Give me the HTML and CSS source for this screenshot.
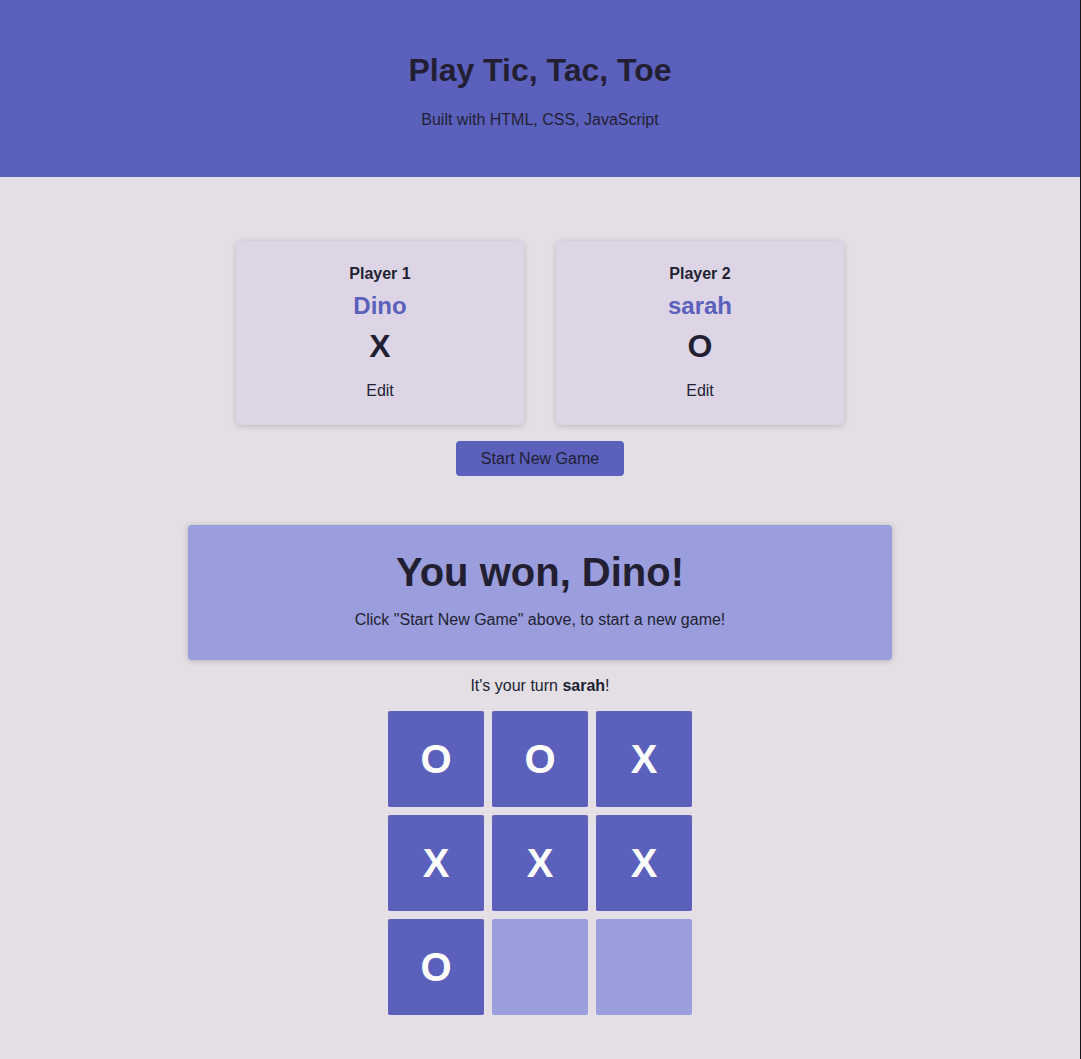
FILE: index.html
```html
<!DOCTYPE html>
<html lang="en">
<head>
<meta charset="utf-8">
<title>Tic Tac Toe</title>
<link rel="stylesheet" href="styles.css">
</head>
<body>
<header class="main-header">
  <h1>Play Tic, Tac, Toe</h1>
  <p>Built with HTML, CSS, JavaScript</p>
</header>
<main>
  <section class="config">
    <ol class="players">
      <li class="player-card">
        <h2>Player 1</h2>
        <h3 class="player-name">Dino</h3>
        <p class="symbol">X</p>
        <button class="edit-btn">Edit</button>
      </li>
      <li class="player-card">
        <h2>Player 2</h2>
        <h3 class="player-name">sarah</h3>
        <p class="symbol">O</p>
        <button class="edit-btn">Edit</button>
      </li>
    </ol>
    <button class="start-btn">Start New Game</button>
  </section>
  <section class="game">
    <article class="game-over">
      <h2>You won, Dino!</h2>
      <p>Click "Start New Game" above, to start a new game!</p>
    </article>
    <p class="turn">It's your turn <span class="active-name">sarah</span>!</p>
    <ol class="board">
      <li class="cell taken">O</li>
      <li class="cell taken">O</li>
      <li class="cell taken">X</li>
      <li class="cell taken">X</li>
      <li class="cell taken">X</li>
      <li class="cell taken">X</li>
      <li class="cell taken">O</li>
      <li class="cell"></li>
      <li class="cell"></li>
    </ol>
  </section>
</main>
</body>
</html>
```

FILE: styles.css
```css
* { box-sizing: border-box; }

html {
  margin: 0;
  padding: 0;
  background-color: #16151c;
}

body {
  margin: 0 1px 0 0;
  padding: 0;
  font-family: "Liberation Sans", Arial, sans-serif;
  background-color: #e3dfe5;
  color: #221f33;
  min-height: 1059px;
}

.main-header {
  background-color: #5a60bc;
  height: 177px;
  padding-top: 52px;
  text-align: center;
}

.main-header h1 {
  margin: 0;
  font-size: 32px;
  line-height: 37px;
}

.main-header p {
  margin: 22px 0 0;
  font-size: 16px;
  line-height: 18px;
}

main {
  display: flex;
  flex-direction: column;
  align-items: center;
}

.config {
  display: flex;
  flex-direction: column;
  align-items: center;
  margin-top: 64px;
}

.players {
  list-style: none;
  margin: 0;
  padding: 0;
  display: flex;
  gap: 32px;
}

.player-card {
  width: 288px;
  height: 184px;
  background-color: #ddd5e5;
  border-radius: 6px;
  box-shadow: 0 1px 6px rgba(0, 0, 0, 0.18);
  text-align: center;
  display: flex;
  flex-direction: column;
  align-items: center;
  padding-top: 24px;
}

.player-card h2 {
  margin: 0;
  font-size: 16px;
  line-height: 18px;
}

.player-name {
  margin: 9px 0 0;
  font-size: 24px;
  line-height: 28px;
  color: #5a60bc;
}

.symbol {
  margin: 8px 0 0;
  font-size: 32px;
  line-height: 37px;
  font-weight: bold;
}

.edit-btn {
  margin-top: 17px;
  background: none;
  border: none;
  font: inherit;
  font-size: 16px;
  line-height: 18px;
  color: #221f33;
  padding: 0;
  cursor: pointer;
}

.start-btn {
  margin-top: 16px;
  width: 168px;
  height: 35px;
  background-color: #5a60bc;
  border: none;
  border-radius: 4px;
  font: inherit;
  font-size: 16px;
  color: #221f33;
  cursor: pointer;
}

.game {
  display: flex;
  flex-direction: column;
  align-items: center;
  margin-top: 49px;
}

.game-over {
  width: 704px;
  height: 135px;
  background-color: #9a9edc;
  border-radius: 4px;
  box-shadow: 0 1px 6px rgba(0, 0, 0, 0.2);
  text-align: center;
  padding-top: 24px;
}

.game-over h2 {
  margin: 0;
  font-size: 40px;
  line-height: 46px;
}

.game-over p {
  margin: 16px 0 0;
  font-size: 16px;
  line-height: 18px;
}

.turn {
  margin: 17px 0 0;
  font-size: 16px;
  line-height: 18px;
}

.active-name {
  font-weight: bold;
}

.board {
  list-style: none;
  margin: 16px 0 0;
  padding: 0;
  display: grid;
  grid-template-columns: repeat(3, 96px);
  grid-auto-rows: 96px;
  gap: 8px;
}

.cell {
  background-color: #9a9edc;
  border-radius: 2px;
  display: flex;
  align-items: center;
  justify-content: center;
  color: #ffffff;
  font-size: 40px;
  font-weight: bold;
}

.cell.taken {
  background-color: #5a60bc;
}
```
